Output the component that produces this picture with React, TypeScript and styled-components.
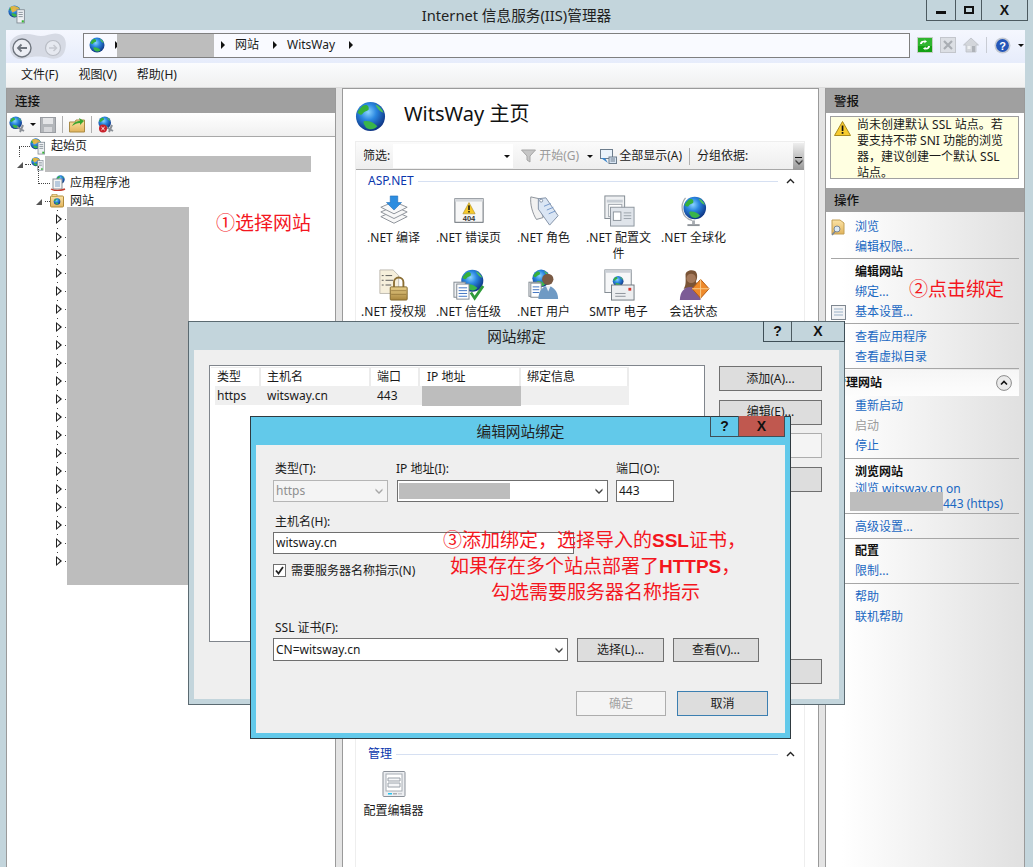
import React from 'react';
import styled, { createGlobalStyle } from 'styled-components';

const Global = createGlobalStyle`
  html, body { margin: 0; padding: 0; background: #c3d5dc; }
  * { box-sizing: border-box; }
`;

const FONT = `"Noto Sans", "Noto Sans CJK SC", "Liberation Sans", sans-serif`;
const CJK = `"Noto Sans CJK SC", "Noto Sans", sans-serif`;

const Root = styled.div`
  position: relative;
  width: 1033px;
  height: 867px;
  overflow: hidden;
  background: #c3d5dc;
  font: 12px/16px ${FONT};
  color: #1a1a1a;
  display: flex;
  flex-direction: column;
`;
const HiddenDefs = styled.svg`
  position: absolute;
  width: 0;
  height: 0;
`;
const TitleBar = styled.header`
  height: 30px;
  flex: none;
  display: grid;
  grid-template-columns: 1fr auto 1fr;
`;
const TitleIconCell = styled.div`
  padding: 5px 0 0 8px;
`;
const WindowTitle = styled.div`
  font-size: 14.67px;
  line-height: 30px;
  color: #222;
`;
const WindowControls = styled.div`
  justify-self: end;
  display: flex;
  height: 21px;
  margin-right: 5px;
  border: 1px solid #4c5a60;
  border-top: none;
`;
const CtlButton = styled.div<{ $w: number; $red?: boolean }>`
  width: ${p => p.$w}px;
  display: flex;
  align-items: center;
  justify-content: center;
  background: ${p => (p.$red ? '#c0584f' : 'transparent')};
  font: bold 14px/16px "Liberation Sans", sans-serif;
  color: #111;
  & + & { border-left: 1px solid #4c5a60; }
`;
const MinGlyph = styled.span`
  width: 10px;
  height: 3px;
  margin-top: 5px;
  background: #111;
`;
const MaxGlyph = styled.span`
  width: 10px;
  height: 8px;
  border: 2px solid #111;
`;
const Win = styled.div`
  flex: 1;
  margin: 0 8px 0 6px;
  display: flex;
  flex-direction: column;
  min-height: 0;
`;
const NavBar = styled.div`
  height: 33px;
  flex: none;
  display: flex;
  align-items: center;
  padding-left: 3px;
  background: linear-gradient(#f5f7fe, #e6ecfb);
`;
const BackCluster = styled.div`
  width: 74px;
  height: 30px;
  flex: none;
`;
const Breadcrumb = styled.div`
  width: 827px;
  height: 25px;
  flex: none;
  margin-top: -3px;
  border: 1px solid #7f7f7f;
  background: #f9faff;
  display: flex;
  align-items: center;
  padding-left: 5px;
`;
const Crumb = styled.span`
  margin: 0 11px 0 10px;
`;
const CrumbArrow = styled.span<{ $ml?: number; $mr?: number }>`
  width: 0;
  height: 0;
  flex: none;
  border-left: 4px solid #111;
  border-top: 4px solid transparent;
  border-bottom: 4px solid transparent;
  margin-left: ${p => p.$ml ?? 3}px;
  margin-right: ${p => p.$mr ?? 0}px;
`;
const GrayBlock = styled.span<{ $w: number; $h: number; $ml?: number; $mr?: number }>`
  display: block;
  flex: none;
  width: ${p => p.$w}px;
  height: ${p => p.$h}px;
  margin-left: ${p => p.$ml ?? 0}px;
  margin-right: ${p => p.$mr ?? 0}px;
  background: #bdbdbd;
`;
const NavTools = styled.div`
  display: flex;
  align-items: center;
  gap: 7px;
  margin-left: 7px;
  margin-top: -3px;
`;
const ToolSep = styled.span`
  width: 1px;
  height: 16px;
  background: #c8ccd4;
`;
const Caret = styled.span`
  width: 0;
  height: 0;
  flex: none;
  border-top: 3px solid #111;
  border-left: 3px solid transparent;
  border-right: 3px solid transparent;
`;
const MenuBar = styled.nav`
  height: 25px;
  flex: none;
  display: flex;
  align-items: center;
  gap: 20px;
  padding-left: 15px;
  background: linear-gradient(#fbfcfe, #f0f0f0);
  border-bottom: 1px solid #dcdcdc;
`;
const Panes = styled.main`
  flex: 1;
  min-height: 0;
  display: grid;
  grid-template-columns: 330px 477px 200px;
  gap: 6px;
  background: #e4e4e4;
`;
const Pane = styled.section`
  background: #fff;
  border: 1px solid #9a9a9a;
  border-bottom: none;
  display: flex;
  flex-direction: column;
  min-height: 0;
`;
const PaneHead = styled.h2`
  margin: 0;
  height: 24px;
  flex: none;
  background: #a0a0a0;
  color: #111;
  font: 500 12.5px/25px ${FONT};
  padding-left: 8px;
`;
const LeftTools = styled.div`
  height: 24px;
  flex: none;
  display: flex;
  align-items: center;
  padding-left: 2px;
  gap: 4px;
  background: linear-gradient(#fff, #f0f0f0);
  border-bottom: 1px solid #a8a8a8;
`;
const VSep = styled.span<{ $ml?: number }>`
  width: 1px;
  height: 17px;
  flex: none;
  margin: 0 2px 0 ${p => p.$ml ?? 2}px;
  background: #b0b0b0;
`;
const Tree = styled.div`
  display: flex;
  flex-direction: column;
`;
const TreeRow = styled.div<{ $indent: number }>`
  height: 18px;
  flex: none;
  display: flex;
  align-items: center;
  padding-left: ${p => p.$indent}px;
`;
const Dots = styled.span<{ $w: number; $up?: number; $down?: number; $ml?: number }>`
  position: relative;
  width: ${p => p.$w}px;
  margin-left: ${p => p.$ml ?? 0}px;
  height: 0;
  border-top: 1px dotted #444;
  flex: none;
  ${p =>
    p.$up
      ? `&::before { content: ''; position: absolute; left: 0; bottom: 0; height: ${p.$up}px; border-left: 1px dotted #444; }`
      : ''}
  ${p =>
    p.$down
      ? `&::before { content: ''; position: absolute; left: 0; top: 0; height: ${p.$down}px; border-left: 1px dotted #444; }`
      : ''}
`;
const TreeLabel = styled.span<{ $ml: number }>`
  margin-left: ${p => p.$ml}px;
  white-space: nowrap;
`;
const ExpandedTri = styled.span`
  width: 0;
  height: 0;
  flex: none;
  border-left: 6px solid transparent;
  border-bottom: 6px solid #555;
  margin-top: 2px;
`;
const TriSlot = styled.span`
  position: relative;
  display: flex;
  flex: none;
  &::before {
    content: '';
    position: absolute;
    left: 1px;
    top: -4px;
    width: 1px;
    height: 1px;
    background: #444;
  }
`;
const CollapsedTri = styled.span`
  width: 6px;
  height: 10px;
  flex: none;
  position: relative;
  &::before {
    content: '';
    position: absolute;
    left: 0;
    top: 0;
    border-left: 6px solid #222;
    border-top: 5px solid transparent;
    border-bottom: 5px solid transparent;
  }
  &::after {
    content: '';
    position: absolute;
    left: 1px;
    top: 2px;
    border-left: 3px solid #fff;
    border-top: 3px solid transparent;
    border-bottom: 3px solid transparent;
  }
`;
const PageHead = styled.div`
  height: 52px;
  flex: none;
  display: flex;
  align-items: flex-start;
  padding: 12px 0 0 12px;
  gap: 18px;
`;
const PageTitle = styled.h1`
  margin: 0;
  font: 400 20px/26px ${FONT};
  color: #111;
`;
const Frame = styled.div`
  flex: 1;
  margin: 0 13px 0 12px;
  border-left: 1px solid #eee;
  border-right: 1px solid #eee;
  display: flex;
  flex-direction: column;
`;
const FilterBar = styled.div`
  height: 29px;
  flex: none;
  display: flex;
  align-items: center;
  padding: 1px 0 0 7px;
  background: linear-gradient(#fbfbfb, #eeeeee);
  border-top: 1px solid #eee;
  border-bottom: 1px solid #a8a8a8;
`;
const FilterInput = styled.div`
  width: 120px;
  height: 24px;
  margin-left: 3px;
  background: #fff;
  display: flex;
  align-items: center;
  justify-content: flex-end;
  padding-right: 3px;
`;
const FilterItem = styled.span<{ $dim?: boolean; $ml?: number }>`
  display: flex;
  align-items: center;
  flex: none;
  color: ${p => (p.$dim ? '#9a9a9a' : '#1a1a1a')};
  margin-left: ${p => p.$ml ?? 0}px;
  white-space: nowrap;
`;
const FilterScroll = styled.div`
  width: 11px;
  height: 27px;
  margin-left: auto;
  background: linear-gradient(#eee, #999);
  display: flex;
  flex-direction: column;
  justify-content: flex-end;
  align-items: center;
  padding-bottom: 5px;
  gap: 1px;
`;
const MiniBar = styled.span`
  width: 7px;
  height: 1px;
  background: #111;
`;
const SectionHead = styled.div`
  height: 20px;
  flex: none;
  margin-top: 1px;
  display: flex;
  align-items: center;
  padding: 0 9px 0 12px;
  gap: 4px;
`;
const SectionName = styled.span`
  color: #0a36ad;
`;
const SectionRule = styled.span`
  flex: 1;
  height: 1px;
  background: #d6e0f2;
  margin-right: 4px;
`;
const FeatureGrid = styled.div`
  display: grid;
  grid-template-columns: repeat(5, 75px);
  grid-auto-rows: 74px;
  padding-top: 4px;
`;
const Feature = styled.div`
  display: flex;
  flex-direction: column;
  align-items: center;
  text-align: center;
`;
const FeatureIcon = styled.div`
  width: 32px;
  height: 32px;
  margin-bottom: 3px;
  display: flex;
  align-items: center;
  justify-content: center;
  & > svg {
    max-width: 32px;
    max-height: 32px;
  }
`;
const Spacer = styled.div<{ $h: number }>`
  height: ${p => p.$h}px;
  flex: none;
`;
const Alert = styled.div`
  margin: 3px 5px 9px 4px;
  height: 63px;
  flex: none;
  border: 1px solid #a0a0a0;
  background: #ffffe1;
  display: flex;
  padding: 0 0 0 3px;
  gap: 6px;
`;
const AlertIcon = styled.span`
  padding-top: 4px;
  flex: none;
`;
const AlertText = styled.div`
  white-space: nowrap;
  line-height: 16px;
`;
const Actions = styled.div`
  flex: 1;
  padding: 5px 5px 0 5px;
  background: linear-gradient(90deg, #fff 8%, #e0e0e0);
  display: flex;
  flex-direction: column;
`;
const ActionRow = styled.div<{ $bold?: boolean; $dim?: boolean }>`
  height: 20px;
  flex: none;
  display: flex;
  align-items: center;
  white-space: nowrap;
  font-weight: ${p => (p.$bold ? 600 : 400)};
  color: ${p => (p.$bold ? '#111' : p.$dim ? '#9a9a9a' : '#1a68c2')};
`;
const ActionIconSlot = styled.span`
  width: 24px;
  flex: none;
  display: flex;
`;
const WrapLink = styled.div`
  height: 32px;
  margin-top: -1px;
  flex: none;
  line-height: 15px;
  padding-left: 24px;
  color: #1a68c2;
  white-space: nowrap;
  overflow: hidden;
`;
const PortTail = styled.span`
  display: inline-block;
  margin-left: 88px;
`;
const Sep = styled.div<{ $mt?: number; $mb?: number }>`
  height: 1px;
  flex: none;
  background: #a6a6a6;
  margin: ${p => p.$mt ?? 1}px 0 ${p => p.$mb ?? 3}px;
`;
const ManageHead = styled.div`
  height: 26px;
  margin: 1px 0 0 -2px;
  flex: none;
  display: flex;
  align-items: center;
  justify-content: space-between;
  padding: 0 7px 0 5px;
  font-weight: 600;
  color: #111;
  background: linear-gradient(#f6f6f6, #fdfdfd);
`;
const Redaction = styled.div<{ $x: number; $y: number; $w: number; $h: number }>`
  position: absolute;
  left: ${p => p.$x}px;
  top: ${p => p.$y}px;
  width: ${p => p.$w}px;
  height: ${p => p.$h}px;
  background: #bdbdbd;
`;
const Note = styled.div<{ $x: number; $y: number }>`
  position: absolute;
  left: ${p => p.$x}px;
  top: ${p => p.$y}px;
  font: 400 19px/26px ${CJK};
  color: #f4161e;
  white-space: nowrap;
  z-index: 5;
`;
const NoteLatin = styled.b`
  font: 700 19px/26px "Liberation Sans", sans-serif;
`;
const Dialog = styled.div<{ $x: number; $y: number; $w: number; $h: number; $chrome: string; $edge: string }>`
  position: absolute;
  left: ${p => p.$x}px;
  top: ${p => p.$y}px;
  width: ${p => p.$w}px;
  height: ${p => p.$h}px;
  background: ${p => p.$chrome};
  border: 1px solid ${p => p.$edge};
  display: flex;
  flex-direction: column;
  padding: 0 5px 5px;
`;
const DialogHead = styled.div`
  height: 28px;
  flex: none;
  position: relative;
  text-align: center;
  font: 14.67px/28px ${FONT};
  color: #222;
`;
const DialogCtl = styled.div<{ $r: number }>`
  position: absolute;
  top: -1px;
  right: ${p => p.$r}px;
  height: 21px;
  display: flex;
  border: 1px solid #3f4f57;
  border-top: none;
`;
const BindPanel = styled.div`
  flex: 1;
  background: #efefef;
  display: flex;
  gap: 14px;
  padding: 15px 16px 15px 15px;
`;
const BindTable = styled.div`
  width: 496px;
  height: 277px;
  background: #fff;
  border: 1px solid #80858c;
  padding: 1px 0 0 1px;
`;
const Cols = styled.div<{ $head?: boolean }>`
  display: grid;
  grid-template-columns: ${p => (p.$head ? '50px 110px 49px 101px 108px' : '46px 110px 49px 101px 108px')};
  height: 19px;
  width: ${p => (p.$head ? 418 : 414)}px;
  margin-left: ${p => (p.$head ? 0 : 4)}px;
  background: ${p => (p.$head ? '#fff' : '#efefef')};
  align-items: center;
`;
const HeadCell = styled.div<{ $pad?: number }>`
  height: 19px;
  padding-left: ${p => p.$pad ?? 6}px;
  line-height: 18px;
  border-top: 1px solid #ececec;
  border-right: 2px solid #ececec;
`;
const BodyCell = styled.div<{ $pad: number }>`
  padding-left: ${p => p.$pad}px;
`;
const IpCell = styled.div`
  height: 20px;
  margin-left: 2px;
  background: #bdbdbd;
`;
const BtnColumn = styled.div`
  width: 103px;
  display: flex;
  flex-direction: column;
  gap: 8.5px;
  padding-top: 1px;
`;
const Btn = styled.div<{ $w?: number; $h?: number; $kind?: 'off' | 'main'; $end?: boolean }>`
  width: ${p => (p.$w ? `${p.$w}px` : 'auto')};
  height: ${p => p.$h ?? 25}px;
  flex: none;
  display: flex;
  align-items: center;
  justify-content: center;
  background: ${p => (p.$kind === 'off' ? '#f4f4f4' : '#dddddd')};
  border: 1px solid ${p => (p.$kind === 'off' ? '#adadad' : p.$kind === 'main' ? '#3c7fb1' : '#707070')};
  color: ${p => (p.$kind === 'off' ? '#a3a3a3' : '#1a1a1a')};
  margin-top: ${p => (p.$end ? 'auto' : '0')};
`;
const EditPanel = styled.div`
  flex: 1;
  background: #efefef;
  padding: 16px 17px 0 17px;
  display: flex;
  flex-direction: column;
`;
const FieldRow = styled.div`
  display: flex;
  align-items: flex-end;
`;
const Field = styled.div<{ $w: number; $ml?: number }>`
  width: ${p => p.$w}px;
  margin-left: ${p => p.$ml ?? 0}px;
  flex: none;
`;
const FieldLabel = styled.label<{ $mt?: number; $ml?: number; $mb?: number }>`
  display: block;
  height: 16px;
  margin: ${p => p.$mt ?? 0}px 0 ${p => p.$mb ?? 3}px ${p => p.$ml ?? 2}px;
  white-space: nowrap;
`;
const Box = styled.div<{ $h?: number; $off?: boolean }>`
  height: ${p => p.$h ?? 22}px;
  flex: none;
  border: 1px solid ${p => (p.$off ? '#b5b5b5' : '#6f6f6f')};
  background: ${p => (p.$off ? '#f4f4f4' : '#fff')};
  color: ${p => (p.$off ? '#8f8f8f' : '#1a1a1a')};
  display: flex;
  align-items: center;
  justify-content: space-between;
  padding: 0 4px 0 2px;
  white-space: nowrap;
`;
const CheckRow = styled.div`
  display: flex;
  align-items: center;
  height: 13px;
  margin-top: 10px;
  gap: 5px;
`;
const CheckBox = styled.span`
  width: 13px;
  height: 13px;
  flex: none;
  background: #fff;
  border: 1px solid #6f6f6f;
  display: flex;
  align-items: center;
  justify-content: center;
`;
const Footer = styled.div`
  display: flex;
  justify-content: flex-end;
  gap: 11px;
  margin-top: 29px;
`;
const CertRow = styled.div`
  display: flex;
  align-items: flex-start;
  gap: 9px;
`;

const GlobeDefs = () => (
  <HiddenDefs aria-hidden="true">
    <defs>
      <radialGradient id="globeFill" cx="0.42" cy="0.35" r="0.7">
        <stop offset="0" stopColor="#8ad4ff" />
        <stop offset="0.4" stopColor="#2a86e0" />
        <stop offset="1" stopColor="#0a2a78" />
      </radialGradient>
      <linearGradient id="folderFill" x1="0" y1="0" x2="0" y2="1">
        <stop offset="0" stopColor="#fbe3a6" />
        <stop offset="1" stopColor="#e2b45c" />
      </linearGradient>
      <linearGradient id="goldFill" x1="0" y1="0" x2="0" y2="1">
        <stop offset="0" stopColor="#e8cf8a" />
        <stop offset="1" stopColor="#a9863c" />
      </linearGradient>
    </defs>
  </HiddenDefs>
);

const GlobeG = ({ x = 0, y = 0, s = 1 }: { x?: number; y?: number; s?: number }) => (
  <g transform={`translate(${x} ${y}) scale(${s})`}>
    <circle cx="16" cy="16" r="15" fill="url(#globeFill)" />
    <path d="M8 5C12 3 15 5 14 9C12 11 10 10 8 13C7 15 5 14 2.5 12C4 9 6 7 8 5Z" fill="#35b03a" />
    <path d="M9 21C14 20 19 22 23 26C20 30 14 30 11 27C10 25 8 23 9 21Z" fill="#3ab54a" />
    <path d="M21 3.5C25 5 28 8 29.5 12C26 11 23 8 21 3.5Z" fill="#4cc257" />
  </g>
);
const Globe = ({ size }: { size: number }) => (
  <svg width={size} height={size} viewBox="0 0 32 32">
    <GlobeG />
  </svg>
);
const ServerGlobe = ({ size = 18 }: { size?: number }) => (
  <svg width={size} height={size} viewBox="0 0 18 18">
    <GlobeG x={0} y={0} s={0.38} />
    <path d="M2 2C5 0 9 1 11 4L4 7Z" fill="#f2b63a" opacity="0.9" />
    <rect x="8.5" y="4.5" width="7" height="12.5" fill="#eef1f4" stroke="#7d8790" strokeWidth="0.8" />
    <path d="M10 7h4M10 9h4M10 11h4" stroke="#7d8790" strokeWidth="0.8" />
    <rect x="13" y="14.5" width="2" height="2" fill="#32b432" />
  </svg>
);
const SiteFolder = () => (
  <svg width="14" height="14" viewBox="0 0 14 14">
    <rect x="0.5" y="2" width="13" height="11" rx="1" fill="url(#folderFill)" stroke="#b08a3a" />
    <rect x="2" y="0.5" width="5" height="2" fill="#f5d78e" stroke="#b08a3a" strokeWidth="0.6" />
    <GlobeG x={3.5} y={4} s={0.22} />
  </svg>
);
const AppPool = () => (
  <svg width="16" height="16" viewBox="0 0 16 16">
    <GlobeG x={6} y={0} s={0.28} />
    <rect x="3" y="4" width="9" height="10" fill="#f4f4f4" stroke="#8a8f96" />
    <path d="M5 7h5M5 9h5M5 11h5" stroke="#7da0c8" />
    <path d="M1 14C4 16 11 16 15 14" stroke="#c23b2e" strokeWidth="1.5" fill="none" />
  </svg>
);
const BackForward = () => (
  <svg width="58" height="30" viewBox="0 0 58 30">
    <path
      d="M10 3C20 0 26 4 32 4C38 4 44 0 50 2C57 4 58 12 56 18C54 26 46 28 40 26C34 24 24 24 18 26C10 29 2 26 1 16C0 9 4 5 10 3Z"
      fill="#d6dae4"
    />
    <circle cx="13" cy="16" r="9" fill="#eceef4" stroke="#6f757e" strokeWidth="1.4" />
    <path d="M18 16H9M12.5 12.5L9 16L12.5 19.5" fill="none" stroke="#6f757e" strokeWidth="1.8" />
    <circle cx="44" cy="16" r="7.5" fill="#e6e9f0" stroke="#b9bdc5" strokeWidth="1.2" />
    <path d="M40 16H47M44.5 13L47.5 16L44.5 19" fill="none" stroke="#c5c8cf" strokeWidth="1.5" />
  </svg>
);
const RefreshIcon = () => (
  <svg width="16" height="16" viewBox="0 0 16 16">
    <rect x="0.5" y="0.5" width="15" height="15" fill="#2fb52f" stroke="#c4cfc4" />
    <rect x="1" y="9" width="14" height="6" fill="#13a013" />
    <path d="M3 7C3 4 6 3 8 4L7 2.5L10 4.5L7 6.5L7.5 5C6 5 5 6 5 7ZM13 9C13 12 10 13 8 12L9 13.5L6 11.5L9 9.5L8.5 11C10 11 11 10 11 9Z" fill="#fff" />
  </svg>
);
const StopIcon = () => (
  <svg width="16" height="16" viewBox="0 0 16 16">
    <rect x="0.5" y="0.5" width="15" height="15" fill="#dcdfe4" stroke="#c3c6cc" />
    <path d="M4 4L12 12M12 4L4 12" stroke="#a9adb3" strokeWidth="2.2" />
  </svg>
);
const HomeIcon = () => (
  <svg width="16" height="16" viewBox="0 0 16 16">
    <path d="M8 1L0.5 8H3V15H13V8H15.5Z" fill="#d3d6db" stroke="#bcc0c6" strokeWidth="0.8" />
    <rect x="9" y="9" width="3" height="6" fill="#aeb2b8" />
    <rect x="4.5" y="9" width="3" height="3" fill="#eef0f2" />
  </svg>
);
const HelpIcon = () => (
  <svg width="17" height="17" viewBox="0 0 17 17">
    <circle cx="8.5" cy="8.5" r="8" fill="#c4c9d2" />
    <circle cx="8.5" cy="8.5" r="6.4" fill="#2456b8" />
    <text x="8.5" y="12.5" textAnchor="middle" fontFamily="Liberation Sans" fontWeight="700" fontSize="11" fill="#fff">?</text>
  </svg>
);
const ConnectGlobe = ({ bad }: { bad?: boolean }) => (
  <svg width="17" height="17" viewBox="0 0 17 17">
    <GlobeG s={0.42} />
    <path d="M8 11L15 15M14 9L11 16" stroke="#8a8f96" strokeWidth="2" />
    {bad && <circle cx="5" cy="12.5" r="4" fill="#c8202a" />}
    {bad && <path d="M3.4 11L6.6 14M6.6 11L3.4 14" stroke="#fff" />}
  </svg>
);
const SaveIcon = () => (
  <svg width="16" height="16" viewBox="0 0 16 16">
    <rect x="0.5" y="0.5" width="15" height="15" fill="#b3b6ba" stroke="#9a9da2" />
    <rect x="3" y="1" width="10" height="6" fill="#e4e5e7" />
    <rect x="4" y="10" width="8" height="5" fill="#d6d7da" />
  </svg>
);
const FolderArrow = () => (
  <svg width="16" height="16" viewBox="0 0 16 16">
    <path d="M0.5 5H6L7 3H15.5V15H0.5Z" fill="url(#folderFill)" stroke="#a98a44" />
    <path d="M3 9C5 5 8 4 11 4L10 1L15 4L11 8V6C8 6 6 7 3 9Z" fill="#3aa52f" />
  </svg>
);
const Funnel = () => (
  <svg width="15" height="14" viewBox="0 0 15 14">
    <path d="M0.5 1H14.5L9 7V13L6 11V7Z" fill="#c6c6c6" stroke="#a5a5a5" />
  </svg>
);
const ShowAll = () => (
  <svg width="17" height="17" viewBox="0 0 17 17">
    <rect x="0.5" y="1.5" width="12" height="9" fill="#eaf3fb" stroke="#6d7d8c" />
    <rect x="9" y="9" width="7.5" height="6.5" fill="#d8e5f3" stroke="#6d7d8c" />
    <path d="M1 10L8 15L5 10Z" fill="#3a86cc" />
    <path d="M10.5 11H15M10.5 13H15" stroke="#6d7d8c" />
  </svg>
);
const Chevron = () => (
  <svg width="9" height="6" viewBox="0 0 9 6">
    <path d="M1 5L4.5 1.5L8 5" fill="none" stroke="#222" strokeWidth="1.4" />
  </svg>
);
const DownChevron = ({ off }: { off?: boolean }) => (
  <svg width="8" height="6" viewBox="0 0 8 6">
    <path d="M0.5 0.5L4 4L7.5 0.5V2.5L4 6L0.5 2.5Z" fill={off ? '#a8a8a8' : '#444'} />
  </svg>
);
const Warn = () => (
  <svg width="17" height="15" viewBox="0 0 17 15">
    <path d="M8.5 0.5L16.5 14.5H0.5Z" fill="#f7cb2f" stroke="#a98a1c" />
    <rect x="7.7" y="4.5" width="1.7" height="5.5" fill="#111" />
    <rect x="7.7" y="11" width="1.7" height="1.8" fill="#111" />
  </svg>
);
const FolderLens = () => (
  <svg width="15" height="17" viewBox="0 0 15 17">
    <path d="M1 1H9L13 4V15H1Z" fill="url(#folderFill)" stroke="#c29f55" />
    <circle cx="6" cy="10" r="3" fill="#dceaf5" stroke="#7a8796" />
    <path d="M4 12.5L1 16" stroke="#7a8796" strokeWidth="1.6" />
  </svg>
);
const SettingsPage = () => (
  <svg width="15" height="15" viewBox="0 0 15 15">
    <rect x="0.5" y="0.5" width="14" height="14" fill="#f2f3f5" stroke="#7f8790" />
    <path d="M3 4H12M3 7H12M3 10H12" stroke="#9ab0c6" />
  </svg>
);
const UpCircle = () => (
  <svg width="16" height="16" viewBox="0 0 16 16">
    <circle cx="8" cy="8" r="7.4" fill="#eaeaea" stroke="#8a8a8a" />
    <path d="M5 9.5L8 6.5L11 9.5" fill="none" stroke="#111" strokeWidth="1.6" />
  </svg>
);
const CheckMark = () => (
  <svg width="9" height="9" viewBox="0 0 9 9">
    <path d="M1 4.5L3.5 7.5L8 1" fill="none" stroke="#222" strokeWidth="1.8" />
  </svg>
);

const IcoCompile = () => (
  <svg width="34" height="34" viewBox="0 0 34 34">
    {[24, 19, 14].map(y => (
      <path key={y} d={`M3 ${y - 1}L17 ${y - 7}L31 ${y - 1}L17 ${y + 6}Z`} fill="#f8f8f8" stroke="#8a8f96" />
    ))}
    <path d="M13 1H21V8H25L17 16L9 8H13Z" fill="#2d8de0" stroke="#1b6ab5" strokeWidth="0.6" />
  </svg>
);
const IcoError = () => (
  <svg width="34" height="34" viewBox="0 0 34 34">
    <rect x="2" y="4" width="30" height="25" fill="#f7f7f7" stroke="#5f666e" />
    <rect x="2" y="4" width="30" height="3" fill="#d5d8dc" />
    <path d="M17 8L23.5 20H10.5Z" fill="#f6c92c" stroke="#a88a1d" strokeWidth="0.6" />
    <rect x="16.2" y="11" width="1.6" height="5" fill="#111" />
    <rect x="16.2" y="17" width="1.6" height="1.6" fill="#111" />
    <text x="17" y="28" textAnchor="middle" fontFamily="Liberation Sans" fontSize="8" fontWeight="700" fill="#333">404</text>
  </svg>
);
const IcoRoles = () => (
  <svg width="34" height="34" viewBox="0 0 34 34">
    <path d="M3 2L12 4L16 24L9 26C5 20 2 10 3 2Z" fill="#f1f1f1" stroke="#8a8f96" />
    <path d="M11 4L19 3L32 22L23 32L11 15Z" fill="#dbe6f4" stroke="#7f8ea3" />
    <path d="M17 12L24 9M20 16L27 13M22 20L29 17" stroke="#6f94c9" />
    <circle cx="14" cy="6" r="1.6" fill="#fff" stroke="#7f8ea3" />
  </svg>
);
const IcoProfile = () => (
  <svg width="34" height="34" viewBox="0 0 34 34">
    <rect x="2" y="1" width="21" height="24" fill="#eef0f2" stroke="#7f878f" />
    <rect x="4" y="5" width="17" height="3" fill="#c6ccd3" />
    <rect x="6" y="10" width="14" height="13" fill="#fff" stroke="#a0a6ad" />
    <rect x="8" y="13" width="25" height="20" fill="#dfe4ea" stroke="#8b939b" />
    <rect x="11" y="18" width="8" height="9" fill="#fff" stroke="#8b939b" />
    <path d="M22 19H30M22 22H30M22 25H30" stroke="#9aa2aa" />
  </svg>
);
const IcoGlobal = () => (
  <svg width="34" height="34" viewBox="0 0 34 34">
    <path d="M8 3C2 10 3 24 15 27" fill="none" stroke="#a6abb1" strokeWidth="1.4" />
    <GlobeG x={5} y={1} s={0.8} />
    <rect x="15" y="27" width="3" height="4" fill="#a6abb1" />
    <rect x="10" y="31" width="13" height="2" fill="#8e9399" />
  </svg>
);
const IcoAuth = () => (
  <svg width="34" height="34" viewBox="0 0 34 34">
    <path d="M2 1H16L22 7V26H2Z" fill="#f6efdb" stroke="#bdbab0" />
    <path d="M8 7H15M8 12H16M8 17H14M4 7H6M4 12H6M4 17H6" stroke="#555" />
    <path d="M17 19V14A5 5 0 0 1 27 14V19" fill="none" stroke="#8c6f34" strokeWidth="2" />
    <rect x="13" y="19" width="18" height="14" rx="1" fill="url(#goldFill)" stroke="#80662c" />
    <path d="M14 23H30M14 27H30" stroke="#8c6f34" strokeWidth="0.7" />
  </svg>
);
const IcoTrust = () => (
  <svg width="34" height="34" viewBox="0 0 34 34">
    <GlobeG x={8} y={0} s={0.78} />
    <rect x="1" y="14" width="12" height="16" fill="#eef0f2" stroke="#7f878f" />
    <rect x="4" y="16" width="13" height="16" fill="#fff" stroke="#7f878f" />
    <path d="M6 20H15M6 23H15M6 26H15M6 29H15" stroke="#3a6fc0" />
    <path d="M19 25L23 31L32 18" fill="none" stroke="#2e9b3a" strokeWidth="3" />
  </svg>
);
const IcoUsers = () => (
  <svg width="34" height="34" viewBox="0 0 34 34">
    <GlobeG x={4} y={0} s={0.62} />
    <rect x="1" y="14" width="12" height="15" fill="#eef0f2" stroke="#7f878f" />
    <rect x="3" y="15" width="11" height="15" fill="#fff" stroke="#7f878f" />
    <path d="M5 19H12M5 22H12M5 25H12" stroke="#3a6fc0" />
    <circle cx="21" cy="11" r="6" fill="#7a5a44" />
    <path d="M11 32C11 23 16 18 21 18C26 18 32 23 32 32Z" fill="#6f9ac4" />
    <path d="M19 18H24L21.5 24Z" fill="#eef2f6" />
  </svg>
);
const IcoSmtp = () => (
  <svg width="34" height="34" viewBox="0 0 34 34">
    <rect x="2" y="1" width="28" height="24" fill="#f6f7f8" stroke="#7f878f" />
    <rect x="2" y="1" width="28" height="3" fill="#ccd1d7" />
    <GlobeG x={10} y={7} s={0.38} />
    <rect x="9" y="17" width="24" height="16" fill="#eceef0" stroke="#6f777f" />
    <path d="M13 26H24M13 29H24" stroke="#8a9098" />
    <rect x="27" y="20" width="3" height="3" fill="#d6342c" />
  </svg>
);
const IcoSession = () => (
  <svg width="34" height="34" viewBox="0 0 34 34">
    <path d="M8 6C8 2 14 0 18 2C21 4 21 10 19 13C20 16 22 18 22 20L6 21C9 17 8 11 8 6Z" fill="#7a5436" />
    <circle cx="14" cy="10" r="5" fill="#a57a5c" />
    <path d="M2 33C2 24 7 19 13 19C19 19 24 24 24 33Z" fill="#7c5c96" />
    <path d="M24 11L33 21L24 31L15 21Z" fill="#ee8a2a" stroke="#b05a14" />
    <path d="M24 11V31M15 21H33" stroke="#fbd08f" />
  </svg>
);
const IcoEditor = () => (
  <svg width="24" height="26" viewBox="0 0 24 26">
    <rect x="1" y="0.5" width="22" height="25" rx="1" fill="#eceef1" stroke="#8b9199" />
    <rect x="4" y="3" width="16" height="17" fill="#fff" stroke="#a6acb3" />
    <path d="M6 7H18V10H6ZM6 12H18V16H6Z" fill="#f5f6f8" stroke="#9aa1a9" />
    <rect x="6" y="22" width="4" height="1.5" fill="#25c4ee" />
    <rect x="11" y="22" width="4" height="1.5" fill="#a9adb3" />
    <rect x="16" y="22" width="4" height="1.5" fill="#c9ccd1" />
  </svg>
);

const features = [
  { icon: <IcoCompile />, label: ['.NET 编译'] },
  { icon: <IcoError />, label: ['.NET 错误页'] },
  { icon: <IcoRoles />, label: ['.NET 角色'] },
  { icon: <IcoProfile />, label: ['.NET 配置文', '件'] },
  { icon: <IcoGlobal />, label: ['.NET 全球化'] },
  { icon: <IcoAuth />, label: ['.NET 授权规', '则'] },
  { icon: <IcoTrust />, label: ['.NET 信任级', '别'] },
  { icon: <IcoUsers />, label: ['.NET 用户'] },
  { icon: <IcoSmtp />, label: ['SMTP 电子', '邮件'] },
  { icon: <IcoSession />, label: ['会话状态'] },
];

const sites = Array.from({ length: 20 }, (_, i) => i);

export default function App() {
  return (
    <Root>
      <Global />
      <GlobeDefs />
      <TitleBar>
        <TitleIconCell>
          <ServerGlobe size={19} />
        </TitleIconCell>
        <WindowTitle>Internet 信息服务(IIS)管理器</WindowTitle>
        <WindowControls>
          <CtlButton $w={28}><MinGlyph /></CtlButton>
          <CtlButton $w={26}><MaxGlyph /></CtlButton>
          <CtlButton $w={46}>X</CtlButton>
        </WindowControls>
      </TitleBar>
      <Win>
        <NavBar>
          <BackCluster>
            <BackForward />
          </BackCluster>
          <Breadcrumb>
            <Globe size={16} />
            <CrumbArrow $ml={10} $mr={-2} />
            <GrayBlock $w={97} $h={23} $mr={4} />
            <CrumbArrow />
            <Crumb>网站</Crumb>
            <CrumbArrow />
            <Crumb>WitsWay</Crumb>
            <CrumbArrow />
          </Breadcrumb>
          <NavTools>
            <RefreshIcon />
            <StopIcon />
            <HomeIcon />
            <ToolSep />
            <HelpIcon />
            <Caret />
          </NavTools>
        </NavBar>
        <MenuBar>
          <span>文件(F)</span>
          <span>视图(V)</span>
          <span>帮助(H)</span>
        </MenuBar>
        <Panes>
          <Pane>
            <PaneHead>连接</PaneHead>
            <LeftTools>
              <ConnectGlobe />
              <Caret />
              <SaveIcon />
              <VSep />
              <FolderArrow />
              <VSep />
              <ConnectGlobe bad />
            </LeftTools>
            <Tree>
              <TreeRow $indent={12}>
                <Dots $w={11} $down={10} />
                <ServerGlobe size={17} />
                <TreeLabel $ml={4}>起始页</TreeLabel>
              </TreeRow>
              <TreeRow $indent={10}>
                <ExpandedTri />
                <Dots $w={6} $ml={2} />
                <ServerGlobe size={14} />
                <GrayBlock $w={266} $h={16} />
              </TreeRow>
              <Spacer $h={1} />
              <TreeRow $indent={31}>
                <Dots $w={12} $up={18} />
                <AppPool />
                <TreeLabel $ml={4}>应用程序池</TreeLabel>
              </TreeRow>
              <TreeRow $indent={29}>
                <ExpandedTri />
                <Dots $w={5} $ml={3} />
                <SiteFolder />
                <TreeLabel $ml={6}>网站</TreeLabel>
              </TreeRow>
              {sites.map(i => (
                <TreeRow key={i} $indent={49}>
                  <TriSlot>
                    <CollapsedTri />
                  </TriSlot>
                  <Dots $w={3} $ml={3} />
                </TreeRow>
              ))}
            </Tree>
          </Pane>
          <Pane>
            <PageHead>
              <Globe size={31} />
              <PageTitle>WitsWay 主页</PageTitle>
            </PageHead>
            <Frame>
              <FilterBar>
                <span>筛选:</span>
                <FilterInput>
                  <Caret />
                </FilterInput>
                <FilterItem $ml={8}>
                  <Funnel />
                </FilterItem>
                <FilterItem $dim $ml={3}>开始(G)</FilterItem>
                <FilterItem $ml={8}>
                  <Caret />
                </FilterItem>
                <FilterItem $ml={7}>
                  <ShowAll />
                </FilterItem>
                <FilterItem $ml={2}>全部显示(A)</FilterItem>
                <VSep $ml={7} />
                <FilterItem $ml={5}>分组依据:</FilterItem>
                <FilterScroll>
                  <MiniBar />
                  <DownChevron />
                </FilterScroll>
              </FilterBar>
              <SectionHead>
                <SectionName>ASP.NET</SectionName>
                <SectionRule />
                <Chevron />
              </SectionHead>
              <FeatureGrid>
                {features.map(f => (
                  <Feature key={f.label[0]}>
                    <FeatureIcon>{f.icon}</FeatureIcon>
                    {f.label.map(l => (
                      <span key={l}>{l}</span>
                    ))}
                  </Feature>
                ))}
              </FeatureGrid>
              <Spacer $h={400} />
              <SectionHead>
                <SectionName>管理</SectionName>
                <SectionRule />
                <Chevron />
              </SectionHead>
              <FeatureGrid>
                <Feature>
                  <FeatureIcon>
                    <IcoEditor />
                  </FeatureIcon>
                  <span>配置编辑器</span>
                </Feature>
              </FeatureGrid>
            </Frame>
          </Pane>
          <Pane>
            <PaneHead>警报</PaneHead>
            <Alert>
              <AlertIcon><Warn /></AlertIcon>
              <AlertText>
                尚未创建默认 SSL 站点。若
                <br />
                要支持不带 SNI 功能的浏览
                <br />
                器，建议创建一个默认 SSL
                <br />
                站点。
              </AlertText>
            </Alert>
            <PaneHead>操作</PaneHead>
            <Actions>
              <ActionRow>
                <ActionIconSlot><FolderLens /></ActionIconSlot>浏览
              </ActionRow>
              <ActionRow><ActionIconSlot />编辑权限...</ActionRow>
              <Sep />
              <ActionRow $bold><ActionIconSlot />编辑网站</ActionRow>
              <ActionRow><ActionIconSlot />绑定...</ActionRow>
              <ActionRow>
                <ActionIconSlot><SettingsPage /></ActionIconSlot>基本设置...
              </ActionRow>
              <Sep />
              <ActionRow><ActionIconSlot />查看应用程序</ActionRow>
              <ActionRow><ActionIconSlot />查看虚拟目录</ActionRow>
              <Sep $mb={0} />
              <ManageHead>
                <span>管理网站</span>
                <UpCircle />
              </ManageHead>
              <ActionRow><ActionIconSlot />重新启动</ActionRow>
              <ActionRow $dim><ActionIconSlot />启动</ActionRow>
              <ActionRow><ActionIconSlot />停止</ActionRow>
              <Sep $mt={2} />
              <ActionRow $bold><ActionIconSlot />浏览网站</ActionRow>
              <WrapLink>
                浏览 witsway.cn on
                <br />
                <PortTail>443 (https)</PortTail>
              </WrapLink>
              <Sep $mt={0} />
              <ActionRow><ActionIconSlot />高级设置...</ActionRow>
              <Sep $mb={2} />
              <ActionRow $bold><ActionIconSlot />配置</ActionRow>
              <ActionRow><ActionIconSlot />限制...</ActionRow>
              <Sep $mt={2} />
              <ActionRow><ActionIconSlot />帮助</ActionRow>
              <ActionRow><ActionIconSlot />联机帮助</ActionRow>
            </Actions>
          </Pane>
        </Panes>
      </Win>

      <Redaction $x={67} $y={207} $w={122} $h={378} />
      <Redaction $x={850} $y={492} $w={93} $h={19} />

      <Note $x={216} $y={209}>①选择网站</Note>
      <Note $x={909} $y={275}>②点击绑定</Note>

      <Dialog $x={188} $y={321} $w={657} $h={384} $chrome="#c3d5dc" $edge="#5b6a71">
        <DialogHead>
          网站绑定
          <DialogCtl $r={-6}>
            <CtlButton $w={27}>?</CtlButton>
            <CtlButton $w={53}>X</CtlButton>
          </DialogCtl>
        </DialogHead>
        <BindPanel>
          <BindTable>
            <Cols $head>
              <HeadCell>类型</HeadCell>
              <HeadCell>主机名</HeadCell>
              <HeadCell>端口</HeadCell>
              <HeadCell $pad={7}>IP 地址</HeadCell>
              <HeadCell>绑定信息</HeadCell>
            </Cols>
            <Cols>
              <BodyCell $pad={2}>https</BodyCell>
              <BodyCell $pad={6}>witsway.cn</BodyCell>
              <BodyCell $pad={6}>443</BodyCell>
              <IpCell />
              <BodyCell $pad={0} />
            </Cols>
          </BindTable>
          <BtnColumn>
            <Btn>添加(A)...</Btn>
            <Btn>编辑(E)...</Btn>
            <Btn $kind="off">删除(R)</Btn>
            <Btn>浏览(B)</Btn>
            <Btn $end>关闭(C)</Btn>
          </BtnColumn>
        </BindPanel>
      </Dialog>

      <Dialog $x={250} $y={416} $w={541} $h={323} $chrome="#62c9ea" $edge="#2f3a40">
        <DialogHead>
          编辑网站绑定
          <DialogCtl $r={0}>
            <CtlButton $w={27}>?</CtlButton>
            <CtlButton $w={46} $red>X</CtlButton>
          </DialogCtl>
        </DialogHead>
        <EditPanel>
          <FieldRow>
            <Field $w={115}>
              <FieldLabel>类型(T):</FieldLabel>
              <Box $off>
                https
                <DownChevron off />
              </Box>
            </Field>
            <Field $w={211} $ml={9}>
              <FieldLabel $ml={-1}>IP 地址(I):</FieldLabel>
              <Box>
                <GrayBlock $w={111} $h={16} $ml={-1} />
                <DownChevron />
              </Box>
            </Field>
            <Field $w={58} $ml={8}>
              <FieldLabel $ml={0}>端口(O):</FieldLabel>
              <Box>443</Box>
            </Field>
          </FieldRow>
          <Field $w={301}>
            <FieldLabel $mt={12} $mb={2}>主机名(H):</FieldLabel>
            <Box>witsway.cn</Box>
          </Field>
          <CheckRow>
            <CheckBox><CheckMark /></CheckBox>
            需要服务器名称指示(N)
          </CheckRow>
          <FieldLabel $mt={43} $mb={2}>SSL 证书(F):</FieldLabel>
          <CertRow>
            <Field $w={295}>
              <Box $h={23}>
                CN=witsway.cn
                <DownChevron />
              </Box>
            </Field>
            <Btn $w={87} $h={24}>选择(L)...</Btn>
            <Btn $w={86} $h={24}>查看(V)...</Btn>
          </CertRow>
          <Footer>
            <Btn $w={90} $kind="off">确定</Btn>
            <Btn $w={91} $kind="main">取消</Btn>
          </Footer>
        </EditPanel>
      </Dialog>

      <Note $x={443} $y={526}>③添加绑定，选择导入的<NoteLatin>SSL</NoteLatin>证书，</Note>
      <Note $x={450} $y={552}>如果存在多个站点部署了<NoteLatin>HTTPS</NoteLatin>，</Note>
      <Note $x={491} $y={578}>勾选需要服务器名称指示</Note>
    </Root>
  );
}
